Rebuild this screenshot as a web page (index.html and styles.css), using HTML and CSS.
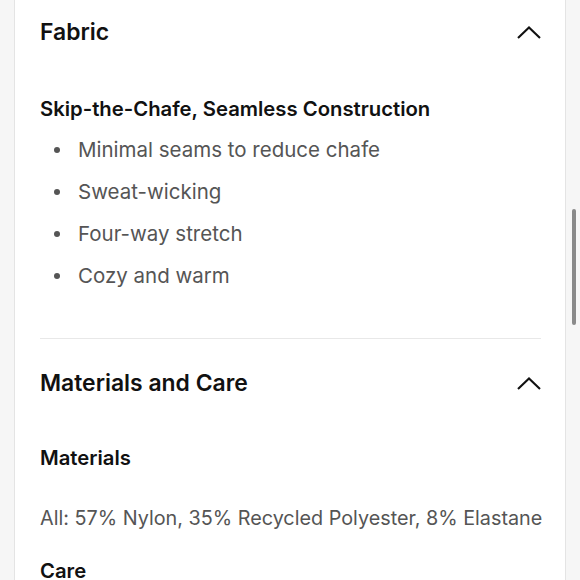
FILE: index.html
```html
<!DOCTYPE html>
<html>
<head>
<meta charset="utf-8">
<link rel="stylesheet" href="styles.css">
</head>
<body>
<div class="page">
  <div class="gutter gutter-left"></div>
  <main class="main">
    <section class="section section-fabric">
      <div class="sec-head">
        <h2 class="sec-title">Fabric</h2>
        <svg class="chevron" width="24" height="13" viewBox="0 0 24 13"><path d="M1 12 L12 1.5 L23 12" fill="none" stroke="#111" stroke-width="2.1"/></svg>
      </div>
      <h3 class="sub">Skip-the-Chafe, Seamless Construction</h3>
      <ul class="bullets">
        <li>Minimal seams to reduce chafe</li>
        <li>Sweat-wicking</li>
        <li>Four-way stretch</li>
        <li>Cozy and warm</li>
      </ul>
    </section>
    <section class="section section-care">
      <div class="sec-head">
        <h2 class="sec-title">Materials and Care</h2>
        <svg class="chevron" width="24" height="13" viewBox="0 0 24 13"><path d="M1 12 L12 1.5 L23 12" fill="none" stroke="#111" stroke-width="2.1"/></svg>
      </div>
      <h3 class="sub sub-materials">Materials</h3>
      <p class="text">All: 57% Nylon, 35% Recycled Polyester, 8% Elastane</p>
      <h3 class="sub sub-care">Care</h3>
    </section>
  </main>
  <div class="gutter gutter-right"><div class="thumb"></div></div>
</div>
</body>
</html>
```

FILE: styles.css
```css
html, body {
  margin: 0;
  padding: 0;
  height: 580px;
  overflow: hidden;
  background: #fff;
}
body {
  font-family: Inter, "Noto Sans", sans-serif;
  color: #111;
}
.page {
  display: flex;
  width: 580px;
  height: 580px;
}
.gutter {
  flex: none;
  background: #f6f6f6;
}
.gutter-left {
  border-right: 1px solid #e4e4e4;
  width: 14px;
}
.gutter-right {
  border-left: 1px solid #e4e4e4;
  width: 14px;
  position: relative;
}
.thumb {
  position: absolute;
  left: 6px;
  top: 209px;
  width: 4px;
  height: 116px;
  border-radius: 2px;
  background: #8a8a8a;
}
.main {
  flex: 1;
  padding: 0 14px 0 25px;
  overflow: hidden;
}
.section {
  margin-right: 10px;
}
.section-fabric {
  border-bottom: 1px solid #e8e8e8;
  padding-bottom: 41px;
}
.sec-head {
  display: flex;
  align-items: center;
  justify-content: space-between;
  height: 64px;
}
.section-care .sec-head {
  margin-top: 12px;
}
.sec-title {
  margin: 0;
  font-size: 22.9px;
  font-weight: 600;
}
.chevron {
  display: block;
}
.sub {
  margin: 31px 0 0;
  font-size: 20.3px;
  line-height: 28px;
  font-weight: 600;
}
.bullets {
  margin: 6px 0 0;
  padding: 0;
  list-style: none;
  color: #555;
  font-size: 20.5px;
  line-height: 42px;
}
.bullets li {
  display: flex;
  align-items: center;
}
.bullets li::before {
  content: "";
  width: 6px;
  height: 6px;
  border-radius: 50%;
  background: #555;
  margin: 0 18px 0 14px;
  flex: none;
}
.sub-materials {
  margin-top: 29px;
}
.text {
  margin: 31px -12px 0 0;
  color: #555;
  font-size: 19.8px;
  line-height: 30px;
  white-space: nowrap;
}
.sub-care {
  margin-top: 24px;
}
```
